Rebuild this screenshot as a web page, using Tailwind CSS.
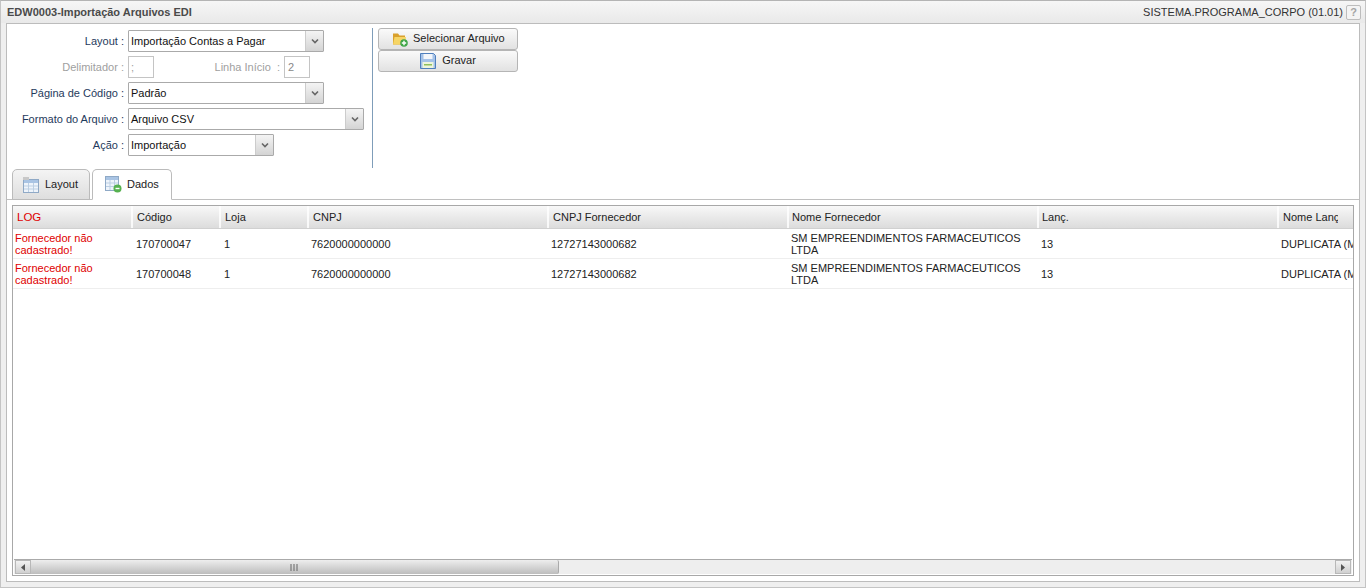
<!DOCTYPE html>
<html lang="pt"><head><meta charset="utf-8"><script src="https://cdn.jsdelivr.net/npm/@tailwindcss/browser@4"></script></head>
<body class="w-[1366px] h-[588px] overflow-hidden bg-[#efefef] font-['Liberation_Sans',Arial,sans-serif] text-[11px] text-[#222]">
<div class="h-[588px] flex flex-col border-t border-[#b4b4b4] border-x border-x-[#c4c4c4] border-b border-b-[#c4c4c4]">
  <div class="h-[22px] shrink-0 flex items-center justify-between pl-[6px] pr-[4px] bg-gradient-to-b from-[#f6f6f6] to-[#e9e9e9]">
    <span class="font-bold text-[#4a4a4a]">EDW0003-Importação Arquivos EDI</span>
    <div class="flex items-center gap-[3px]"><span class="text-[#333]">SISTEMA.PROGRAMA_CORPO (01.01)</span><span class="w-[15px] h-[15px] border border-[#bdbdbd] rounded-[2px] bg-[#f4f4f4] text-[#a5a5a5] font-bold flex items-center justify-center leading-none">?</span></div>
  </div>
  <div class="mx-[5px] h-[559px] shrink-0 bg-white border border-[#bcbcbc] flex flex-col">
    <div class="h-[145px] shrink-0 flex pt-[4px]">
      <div class="w-[365px] shrink-0 flex flex-col pt-[2px] gap-[4px]">
        <div class="flex items-center h-[22px]"><label class="w-[121px] text-right text-[#1f3a5c] pr-[4px] shrink-0">Layout :</label>
          <div class="w-[196px] h-[22px] border border-[#aaa] flex items-center justify-between rounded-[1px]"><span class="pl-[2px] text-[#111]">Importação Contas a Pagar</span><span class="w-[18px] h-[20px] border-l border-[#ccc] bg-gradient-to-b from-[#f4f4f4] to-[#d4d4d4] flex items-center justify-center"><svg width="8" height="6" viewBox="0 0 8 6"><path d="M1 1.500 4 4.500 7 1.500" fill="none" stroke="#666" stroke-width="1.600"/></svg></span></div></div>
        <div class="flex items-center h-[22px] text-[#a0a0a0]"><label class="w-[121px] text-right pr-[4px] shrink-0">Delimitador :</label>
          <div class="w-[26px] h-[22px] border border-[#c4c4c4] pl-[2px] leading-[20px]">;</div>
          <label class="w-[130px] text-right pr-[4px]">Linha Início &nbsp;:</label>
          <div class="w-[26px] h-[22px] border border-[#c4c4c4] pl-[3px] leading-[20px] text-[#888]">2</div></div>
        <div class="flex items-center h-[22px]"><label class="w-[121px] text-right text-[#1f3a5c] pr-[4px] shrink-0">Página de Código :</label>
          <div class="w-[196px] h-[22px] border border-[#aaa] flex items-center justify-between rounded-[1px]"><span class="pl-[2px] text-[#111]">Padrão</span><span class="w-[18px] h-[20px] border-l border-[#ccc] bg-gradient-to-b from-[#f4f4f4] to-[#d4d4d4] flex items-center justify-center"><svg width="8" height="6" viewBox="0 0 8 6"><path d="M1 1.500 4 4.500 7 1.500" fill="none" stroke="#666" stroke-width="1.600"/></svg></span></div></div>
        <div class="flex items-center h-[22px]"><label class="w-[121px] text-right text-[#1f3a5c] pr-[4px] shrink-0">Formato do Arquivo :</label>
          <div class="w-[236px] h-[22px] border border-[#aaa] flex items-center justify-between rounded-[1px]"><span class="pl-[2px] text-[#111]">Arquivo CSV</span><span class="w-[18px] h-[20px] border-l border-[#ccc] bg-gradient-to-b from-[#f4f4f4] to-[#d4d4d4] flex items-center justify-center"><svg width="8" height="6" viewBox="0 0 8 6"><path d="M1 1.500 4 4.500 7 1.500" fill="none" stroke="#666" stroke-width="1.600"/></svg></span></div></div>
        <div class="flex items-center h-[22px]"><label class="w-[121px] text-right text-[#1f3a5c] pr-[4px] shrink-0">Ação :</label>
          <div class="w-[146px] h-[22px] border border-[#aaa] flex items-center justify-between rounded-[1px]"><span class="pl-[2px] text-[#111]">Importação</span><span class="w-[18px] h-[20px] border-l border-[#ccc] bg-gradient-to-b from-[#f4f4f4] to-[#d4d4d4] flex items-center justify-center"><svg width="8" height="6" viewBox="0 0 8 6"><path d="M1 1.500 4 4.500 7 1.500" fill="none" stroke="#666" stroke-width="1.600"/></svg></span></div></div>
      </div>
      <div class="w-px h-[140px] bg-[#7f9db9] shrink-0"></div>
      <div class="pl-[5px] flex flex-col">
        <div class="w-[140px] h-[22px] pb-[1px] border border-[#b5b5b5] rounded-[3px] bg-gradient-to-b from-[#fafafa] to-[#e2e2e2] flex items-center pl-[13px] gap-[5px] text-[#222]">
          <svg width="16" height="16" viewBox="0 0 16 16"><path d="M1 2.500h5l1.500 2H13v9H1z" fill="#d9a02c"/><path d="M1 13.500 2.500 6H14l-1 7.500z" fill="#f6d566"/><circle cx="12" cy="12" r="3.800" fill="#3fa648"/><path d="M12 9.800v4.400M9.800 12h4.400" stroke="#fff" stroke-width="1.400"/></svg>
          <span>Selecionar Arquivo</span></div>
        <div class="w-[140px] h-[22px] pb-[1px] border border-[#b5b5b5] rounded-[3px] bg-gradient-to-b from-[#fafafa] to-[#e2e2e2] flex items-center justify-center gap-[6px] text-[#222]">
          <svg width="16" height="16" viewBox="0 0 16 16"><path d="M.5.5h13l2 2v13H.5z" fill="#a5c2e8" stroke="#4f7fbd"/><rect x="3.500" y="1" width="9" height="5" fill="#f3f6fa"/><rect x="2.500" y="9" width="11" height="6" fill="#eef5dc"/><rect x="4" y="11" width="8" height="1.500" fill="#8fbf5c"/></svg>
          <span>Gravar</span></div>
      </div>
    </div>
    <div class="h-[31px] shrink-0 flex items-end pl-[5px] gap-[2px] border-b border-[#c0c0c0]">
      <div class="w-[78px] h-[31px] -mb-px border border-[#bbb] rounded-t-[5px] bg-gradient-to-b from-[#f4f4f4] to-[#dedede] flex items-center pl-[10px] gap-[5px]">
        <svg width="17" height="16" viewBox="0 0 17 16"><rect x=".5" y="2.500" width="15" height="13" fill="#eef4fb" stroke="#8fa9c6"/><rect x="1" y="3" width="14" height="3" fill="#a9c4e4"/><path d="M1 9h14M1 12h14M5.500 6v9M10.500 6v9" stroke="#bccfe3"/><rect x="0" y="0" width="6" height="3" fill="#c8c8c8"/></svg>
        <span class="text-[#222]">Layout</span></div>
      <div class="w-[80px] h-[31px] -mb-px border border-[#bbb] border-b-white rounded-t-[5px] bg-white flex items-center pl-[12px] gap-[5px]">
        <svg width="17" height="17" viewBox="0 0 17 17"><rect x=".5" y=".5" width="13" height="14" fill="#eef4fb" stroke="#8fa9c6"/><rect x="1" y="1" width="12" height="3" fill="#a9c4e4"/><path d="M1 7h12M1 10.500h12M5 4v10M9.500 4v10" stroke="#bccfe3"/><circle cx="12.500" cy="12.500" r="4" fill="#56b14f"/><path d="M10.500 12.500h4" stroke="#fff" stroke-width="1.400"/></svg>
        <span class="text-[#222]">Dados</span></div>
    </div>
    <div class="pl-[5px] pt-[5px]">
      <div class="w-[1342px] h-[371px] border border-[#a8a8a8] relative flex flex-col overflow-hidden">
        <div class="flex h-[23px] shrink-0 bg-gradient-to-b from-[#f8f8f8] to-[#dcdcdc] border-b border-[#d0d0d0]">
          <div class="w-[120px] border-r-2 border-r-white/80 pl-[4px] pt-[1px] flex items-center text-[#e00000] shrink-0 text-[11.500px]">LOG</div>
          <div class="w-[88px] border-r-2 border-r-white/80 pl-[4px] flex items-center shrink-0">Código</div>
          <div class="w-[88px] border-r-2 border-r-white/80 pl-[4px] flex items-center shrink-0">Loja</div>
          <div class="w-[240px] border-r-2 border-r-white/80 pl-[4px] flex items-center shrink-0">CNPJ</div>
          <div class="w-[240px] border-r-2 border-r-white/80 pl-[4px] flex items-center shrink-0">CNPJ Fornecedor</div>
          <div class="w-[250px] border-r-2 border-r-white/80 pl-[3px] flex items-center shrink-0">Nome Fornecedor</div>
          <div class="w-[240px] border-r-2 border-r-white/80 pl-[3px] flex items-center shrink-0">Lanç.</div>
          <div class="w-[59px] pl-[4px] flex items-center shrink-0 overflow-hidden whitespace-nowrap">Nome Lanç</div>
          <div class="w-[15px] shrink-0"></div>
        </div>
        <div class="flex h-[30px] shrink-0 border-b border-[#eee] items-center leading-[12px]">
          <div class="w-[120px] pl-[2px] text-[#e00000] shrink-0">Fornecedor não cadastrado!</div>
          <div class="w-[88px] pl-[3px] shrink-0">170700047</div>
          <div class="w-[88px] pl-[3px] shrink-0">1</div>
          <div class="w-[240px] pl-[2px] shrink-0">7620000000000</div>
          <div class="w-[240px] pl-[2px] shrink-0">12727143000682</div>
          <div class="w-[250px] pl-[2px] pr-[10px] shrink-0">SM EMPREENDIMENTOS FARMACEUTICOS LTDA</div>
          <div class="w-[240px] pl-[2px] shrink-0">13</div>
          <div class="w-[74px] pl-[2px] shrink-0 overflow-hidden whitespace-nowrap">DUPLICATA (MANUAL)</div>
        </div>
        <div class="flex h-[30px] shrink-0 border-b border-[#eee] items-center leading-[12px]">
          <div class="w-[120px] pl-[2px] text-[#e00000] shrink-0">Fornecedor não cadastrado!</div>
          <div class="w-[88px] pl-[3px] shrink-0">170700048</div>
          <div class="w-[88px] pl-[3px] shrink-0">1</div>
          <div class="w-[240px] pl-[2px] shrink-0">7620000000000</div>
          <div class="w-[240px] pl-[2px] shrink-0">12727143000682</div>
          <div class="w-[250px] pl-[2px] pr-[10px] shrink-0">SM EMPREENDIMENTOS FARMACEUTICOS LTDA</div>
          <div class="w-[240px] pl-[2px] shrink-0">13</div>
          <div class="w-[74px] pl-[2px] shrink-0 overflow-hidden whitespace-nowrap">DUPLICATA (MANUAL)</div>
        </div>
        <div class="flex-1"></div>
        <div class="h-[15px] shrink-0 mx-px mb-px border-t border-[#aaa] bg-[#eeeeee] flex">
          <div class="w-[16px] ml-[1px] h-[14px] border border-[#b8b8b8] bg-gradient-to-b from-[#f2f2f2] to-[#d0d0d0] flex items-center justify-center"><svg width="6" height="7" viewBox="0 0 6 7"><path d="M5 0v7L1 3.500z" fill="#555"/></svg></div>
          <div class="w-[528px] h-[14px] bg-gradient-to-b from-[#eeeeee] to-[#bdbdbd] rounded-r-[2px] border-r border-[#aaa] flex items-center justify-center"><svg width="9" height="7" viewBox="0 0 9 7"><path d="M1 0v7M4 0v7M7 0v7" stroke="#666"/></svg></div>
          <div class="flex-1"></div>
          <div class="w-[16px] mr-[1px] h-[14px] border border-[#b8b8b8] bg-gradient-to-b from-[#f2f2f2] to-[#d0d0d0] flex items-center justify-center"><svg width="6" height="7" viewBox="0 0 6 7"><path d="M1 0v7l4-3.500z" fill="#555"/></svg></div>
        </div>
      </div>
    </div>
  </div>
</div>
</body></html>
